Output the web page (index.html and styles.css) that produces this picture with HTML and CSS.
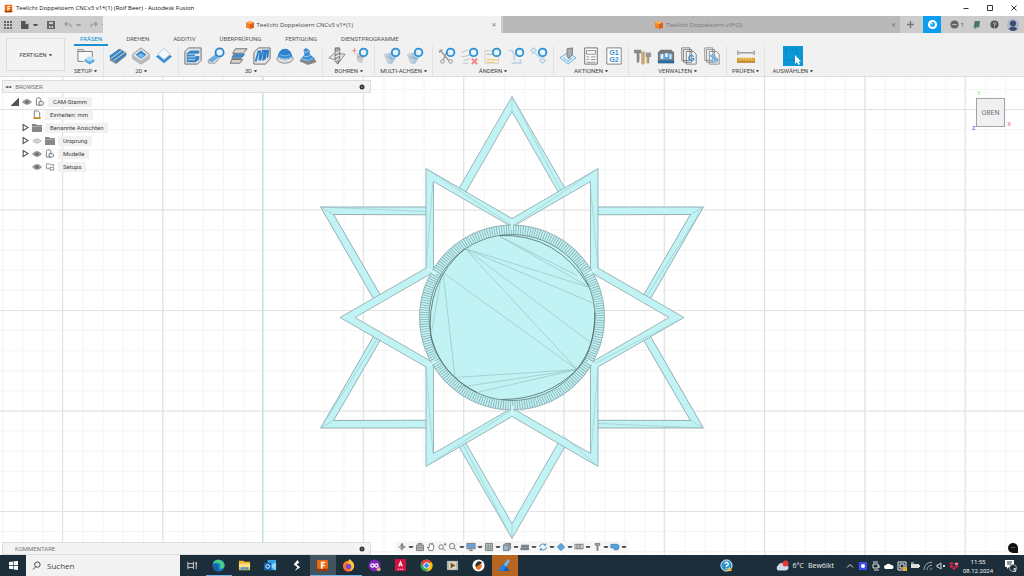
FILE: index.html
```html
<!DOCTYPE html>
<html lang="de">
<head>
<meta charset="utf-8">
<title>Teelicht Doppelstern CNCv3 v1*(1) (Rolf Beer) - Autodesk Fusion</title>
<link rel="stylesheet" href="styles.css">
</head>
<body>
<svg class="defs" aria-hidden="true">
  <symbol id="box" viewBox="0 0 10 10"><path fill="#f58220" d="M0 2 5 0l5 2v6L5 10 0 8z"/><path fill="#ffb15c" d="M0 2 5 0l5 2-5 2z"/><path fill="#d8601a" d="M5 4l5-2v6l-5 2z"/></symbol>
  <symbol id="fusion" viewBox="0 0 10 12"><path fill="#f06a12" d="M0 1h10v10H0z"/><path fill="#9c3505" d="M0 9h10v2H0z"/><path fill="#fff" d="M3.500 2.500h4V4H5v1.300h2v1.400H5V9H3.500z"/></symbol>
  <symbol id="gridi" viewBox="0 0 8 8"><path fill="#666" d="M0 0h2v2H0zM3 0h2v2H3zM6 0h2v2H6zM0 3h2v2H0zM3 3h2v2H3zM6 3h2v2H6zM0 6h2v2H0zM3 6h2v2H3zM6 6h2v2H6z"/></symbol>
  <symbol id="file" viewBox="0 0 8 8"><path fill="#555" d="M0 0h4.500L7.500 3v5H0z"/><path fill="#ccc" d="M4.500 0v3h3z"/></symbol>
  <symbol id="save" viewBox="0 0 8 8"><path fill="#666" d="M0 0h8v8H0z"/><path fill="#ccc" d="M2 1h4v2H2zM2 5h1.500v2H2zM4.500 5H6v2H4.500z"/></symbol>
  <symbol id="undo" viewBox="0 0 8 8"><path fill="none" stroke="#999" stroke-width="1.200" d="M3 1 1 3l2 2M1 3h4q2 0 2 3"/></symbol>
  <symbol id="badge" viewBox="0 0 20 20"><circle cx="14" cy="6" r="4.200" fill="#d9effc" stroke="#2f8fd0" stroke-width="2"/><path fill="#fff" d="M12 5h3v3z"/></symbol>

  <symbol id="setup" viewBox="0 0 20 20"><path fill="#f8f8f8" stroke="#777" d="M1 3h6l1 2h9v11H1z"/><path stroke="#777" d="M1 5h8"/><path fill="#5da7e0" stroke="#fff" d="M14 10l6 3.500v3L14 20l-6-3.500v-3z"/><path fill="#b8dcf7" d="M14 10.500l5 3-5 3-5-3z"/></symbol>
  <symbol id="face" viewBox="0 0 20 20"><path fill="#888" d="M1 11 12 2l7 4v4L8 19l-7-4z"/><path fill="none" stroke="#2f85cf" stroke-width="2.400" d="M1 11 12 3M4 13.500 15.500 5M7 16.500l12-9"/><path stroke="#b9def8" d="M2.500 12.500 14 4M5.500 15l12-9"/></symbol>
  <symbol id="pocket" viewBox="0 0 20 20"><path fill="#e4e4e4" stroke="#888" d="M10 1l9 7v5l-9 6-9-6V8z"/><path fill="#bbb" d="M1 9l9 6v4l-9-6zM19 9l-9 6v4l9-6z"/><path fill="#3587cc" d="M10 4l6 4.500-6 4.500-6-4.500z"/><path fill="#79bbed" d="M10 7l4 2.500-4 2.500-4-2.500z"/></symbol>
  <symbol id="contour" viewBox="0 0 20 20"><path fill="#3b8fd4" d="M10 5l9 5.500-9 7.500-9-7.500z"/><path fill="#f5fafe" stroke="#a9c6dc" d="M10 1.500l7 6.500-7 6-7-6z"/></symbol>
  <symbol id="adapt" viewBox="0 0 20 20"><path fill="#e5e5e5" stroke="#666" d="M1 5l4-4h14v14l-4 4H1z"/><path fill="#3a86c8" d="M3 7l4-3h10v3l-5 1v2h5v4l-4 3H3z"/><path stroke="#c4e2f8" fill="none" d="M4 8h11M4 11h9M4 14h8"/></symbol>
  <symbol id="pocket3" viewBox="0 0 20 20"><path fill="#ddd" stroke="#999" d="M1 15 12 7h6l-9 11H2z"/><path fill="#6fadde" d="M1 15 12 6l4 3L6 17z"/><circle cx="14" cy="6" r="4.500" fill="#e3f3fd" stroke="#2a84cc" stroke-width="2"/></symbol>
  <symbol id="parallel" viewBox="0 0 20 20"><path fill="#d7d7d7" stroke="#666" d="M6 2h13l-4 5H3zM4 8h12l-4 5H2zM2 14h12l-3 4H0z"/><path fill="#398bd0" d="M5 8h12l-4 4H2z"/></symbol>
  <symbol id="scallop" viewBox="0 0 20 20"><path fill="#e7e7e7" stroke="#666" d="M1 6l5-5h13v12l-5 6H1z"/><path fill="none" stroke="#2f7fc6" stroke-width="2" d="M3 16 6 5h2L7 15M8 15l3-11h2l-2 11M13 14l2-10h2l-1 8"/></symbol>
  <symbol id="dome" viewBox="0 0 20 20"><ellipse cx="10" cy="13" rx="9" ry="5" fill="#ddd" stroke="#888"/><path fill="#2f83cc" d="M2 11a8 9 0 0 1 16 0q-8 6-16 0z"/><path fill="none" stroke="#8dc5ef" d="M4 8q6 4 12 0M3 11q7 4 14 0"/></symbol>
  <symbol id="steps" viewBox="0 0 20 20"><path fill="#888" d="M1 14l12-3 6 4v2l-9 3-9-4z"/><path fill="#3b8cd1" d="M2 13 6 9l-1-6 3-2 4 3v4l6 5-7 3z"/><path stroke="#a8d4f4" fill="none" d="M5 5l3 1 4-2M5 10l4 1 4-2M3 13l7 2 6-3"/></symbol>
  <symbol id="drill" viewBox="0 0 20 20"><path fill="#e4e4e4" stroke="#888" d="M1 12l6-5 12 1-6 8z"/><path fill="#aaa" stroke="#666" d="M8 1h5v14l-2 4-3-3z"/><path stroke="#fff" d="M8 7l5-2M8 11l5-2M8 15l5-2"/></symbol>
  <symbol id="drillb" viewBox="0 0 20 20"><path fill="#ccc" d="M6 7h5l4 3-3 8-5-2z"/><path stroke="#e98484" d="M1 4h5M4 1v6"/><path stroke="#999" d="M7 11h6"/><use href="#badge"/></symbol>
  <symbol id="multi" viewBox="0 0 20 20"><path fill="#a9c9e3" d="M1 8l8-2 6 5-5 8-5-1z"/><path fill="#d0d0d0" d="M1 8h5l2 8-3 2z"/><path stroke="#7babd0" d="M4 11l8 2"/><use href="#badge"/></symbol>
  <symbol id="cut" viewBox="0 0 20 20"><path fill="none" stroke="#999" stroke-width="1.500" d="M2 3l10 12M10 5 6 14M1 6l4-3"/><circle cx="5" cy="16" r="2" fill="none" stroke="#888"/><circle cx="14" cy="16" r="2" fill="none" stroke="#888"/><use href="#badge"/></symbol>
  <symbol id="del" viewBox="0 0 20 20"><path fill="none" stroke="#bbb" d="M1 6l7-3M1 11l9-2M3 15l7-2M2 18h6"/><path stroke="#f08080" stroke-width="2" d="M12 13l6 6M18 13l-6 6"/><use href="#badge"/></symbol>
  <symbol id="edit" viewBox="0 0 20 20"><path fill="#f1f1ec" stroke="#ccc" d="M1 4h15v14H1z"/><path stroke="#ecd07a" stroke-width="1.500" d="M3 14h12M3 17h9"/><path stroke="#aaa" d="M3 8h7"/><use href="#badge"/></symbol>
  <symbol id="link" viewBox="0 0 20 20"><path fill="none" stroke="#c0d5e4" stroke-width="2" d="M2 4h4l2 5v6M5 18h10v-4"/><use href="#badge"/></symbol>
  <symbol id="nodes" viewBox="0 0 20 20"><path fill="none" stroke="#b8d0e2" stroke-width="1.500" d="M1 4l3 3 3-3-3-3zM6 7l5 5M14 12l3 3-3 3-3-3z"/><use href="#badge"/></symbol>
  <symbol id="sim" viewBox="0 0 20 20"><path fill="#dbeefb" stroke="#6faad8" d="M1 12l9-6 9 6-9 7z"/><path fill="#aaa" stroke="#777" d="M9 2l6-1v7l-4 5-2-3z"/><path stroke="#6faad8" fill="none" d="M5 12l5 4 5-4"/></symbol>
  <symbol id="sheet" viewBox="0 0 20 20"><path fill="#fafafa" stroke="#666" d="M3 1h14v18H3z"/><path fill="none" stroke="#888" d="M5 4h10v4H5zM5 11h3M10 11h5M5 14h3M10 14h5M5 17h10"/></symbol>
  <symbol id="tools" viewBox="0 0 20 20"><path fill="#888" d="M0 3h8v4H6v9l-2 2-1-2V7H0z"/><path fill="#c9a67a" d="M8 5h4v13l-2 2-2-2z"/><path fill="#999" d="M13 6h6v5h-2v7h-3v-7h-1z"/><path stroke="#d49a45" stroke-width="1.500" d="M15 11v7"/></symbol>
  <symbol id="machine" viewBox="0 0 20 20"><path fill="#777" d="M1 15V6l3-3h12l3 3v12H1z"/><path fill="#5ba5dd" d="M3 7h14v7H3z"/><path fill="#eee" d="M4 8h3v5H4zM9 7h3v4H9zM14 8h2v5h-2z"/><path fill="#2a6ba3" d="M1 15h18v3H1z"/></symbol>
  <symbol id="tmpl" viewBox="0 0 20 20"><path fill="#f7f7f7" stroke="#888" d="M2 1h9v14H2zM4 3h9v14H4zM7 5h8l3 3v11H7z"/><path fill="none" stroke="#7fb0d5" stroke-width="2" d="M8 9l8 8M10 8l7 7M8 14l4 4"/></symbol>
  <symbol id="ruler" viewBox="0 0 20 20"><path fill="none" stroke="#666" d="M1 4v5M19 4v5M2 6.500h16"/><path fill="#dda53c" d="M0 12h20v5H0z"/><path fill="#b27e1f" d="M0 16h20v1.500H0z"/><path stroke="#f6dd9b" d="M4 12v2M7 12v2M10 12v2M13 12v2M16 12v2"/></symbol>
  <symbol id="select" viewBox="0 0 20 20"><path fill="#0b96d6" d="M0 0h20v20H0z"/><path fill="none" stroke="#0986c2" stroke-dasharray="2 1" d="M3 3h11v11H3z"/><path fill="#fff" d="M12 9v9l2-2 1.500 3 1.500-1-1.500-2.500H18z"/></symbol>

  <symbol id="eye" viewBox="0 0 10 8"><path fill="#999" d="M0 4q5-6 10 0-5 6-10 0z"/><circle cx="5" cy="4" r="1.600" fill="#666"/></symbol>
  <symbol id="eyeoff" viewBox="0 0 10 8"><path fill="none" stroke="#aaa" d="M1 4q4-4 8 0-4 4-8 0zM3 4h4"/></symbol>
  <symbol id="folder" viewBox="0 0 10 9"><path fill="#888" d="M0 1h4l1 1h5v7H0z"/><path stroke="#aaa" d="M0 3.500h10"/></symbol>
  <symbol id="comp" viewBox="0 0 10 10"><path fill="#fff" stroke="#777" d="M1 9V2l1-1h3l1 2v6z"/><path fill="#eee" stroke="#777" d="M4 9V5h3l2 1v2L8 9z"/></symbol>
  <symbol id="unit" viewBox="0 0 10 10"><path fill="#fff" stroke="#777" d="M2 8V1h4l2 2v5"/><path stroke="#c48a25" stroke-width="2" d="M1 9h8"/></symbol>
  <symbol id="setf" viewBox="0 0 10 10"><path fill="#fff" stroke="#888" d="M5 7H1V2h3l1 1h4v2M5 6h4v3H5z"/></symbol>
  <symbol id="gear" viewBox="0 0 8 8"><circle cx="4" cy="4" r="2.500" fill="#333"/><path stroke="#999" d="M3 4h2"/></symbol>

  <symbol id="win" viewBox="0 0 10 10"><path fill="#fff" d="M0 1l4.500-.5v4H0zM5.200.4 10 0v4.500H5.200zM0 5.200h4.500v4L0 8.700zM5.200 5.200H10V10l-4.800-.6z"/></symbol>
  <symbol id="glass" viewBox="0 0 10 10"><circle cx="6" cy="4" r="3" fill="none" stroke="#333"/><path stroke="#333" d="M4 6.500 1 9.500"/></symbol>
  <symbol id="task" viewBox="0 0 14 14"><path fill="none" stroke="#ddd" d="M2 3v2h6V3M2 11V9h6v2M2 5v4M8 5v4M11 3v8M10 5h2"/></symbol>
  <symbol id="edge" viewBox="0 0 14 14"><circle cx="7" cy="7" r="6.500" fill="#1686cf"/><path fill="#45cf88" d="M1 5a6.500 6.500 0 0 1 12.500 3q-1 3-5 2 2-6-4-6-2 0-3.500 1z"/><path fill="#1b5fa8" d="M1 6q4-2 6 1-2 4 3 6Q3 15 1 9z"/></symbol>
  <symbol id="explorer" viewBox="0 0 14 14"><path fill="#f4b92f" d="M1 2h5l1 1h6v9H1z"/><path fill="#ffe08a" d="M1 5h12v4H1z"/><path fill="#4899dc" d="M3 9h8v3H9v-1H5v1H3z"/></symbol>
  <symbol id="outlook" viewBox="0 0 14 14"><path fill="#38a7ea" d="M4 1h9v11H4z"/><path fill="#8ed5fa" d="M5 7l8-3v8z"/><path fill="#0b62b5" d="M0 4h8v8H0z"/><circle cx="4" cy="8" r="2" fill="none" stroke="#fff"/></symbol>
  <symbol id="sapp" viewBox="0 0 14 14"><path fill="#fff" d="M8 1 4 6l4 3-3 4 6-4-4-3 3-2z"/></symbol>
  <symbol id="firefox" viewBox="0 0 14 14"><circle cx="7" cy="7.500" r="6" fill="#ff7a22"/><path fill="#ffca3a" d="M8 0q6 4 5 9-2 4-5 4 5-5-2-8z"/><circle cx="7" cy="8" r="3" fill="#7b4ac8"/><path fill="#e5355f" d="M1 6q0 7 7 7.500Q1 15 1 6z"/></symbol>
  <symbol id="infin" viewBox="0 0 14 14"><circle cx="7" cy="7" r="6.500" fill="#7b25b8"/><circle cx="4.800" cy="7" r="1.800" fill="none" stroke="#fff" stroke-width="1.300"/><circle cx="9" cy="7" r="1.800" fill="none" stroke="#fff" stroke-width="1.300"/><circle cx="11.500" cy="11" r="2.200" fill="#e7a37c"/></symbol>
  <symbol id="acad" viewBox="0 0 14 14"><path fill="#d01040" d="M1 0h12v13H1z"/><path fill="none" stroke="#fff" stroke-width="1.200" d="M5 8l2-5 2 5M6 6.500h2"/><path stroke="#fff" stroke-dasharray="1.500 .8" d="M4 11h6"/></symbol>
  <symbol id="chrome" viewBox="0 0 14 14"><circle cx="7" cy="7" r="6.500" fill="#35a853"/><path fill="#e94335" d="M1.300 4A6.500 6.500 0 0 1 12.800 4H7L4 8z"/><path fill="#fbbd05" d="M12.800 4A6.500 6.500 0 0 1 7 13.500L10 8 8 4z"/><circle cx="7" cy="7" r="3" fill="#4285f4" stroke="#fff"/></symbol>
  <symbol id="media" viewBox="0 0 14 14"><path fill="#a7b4bd" d="M1 2h12v10H1z"/><path fill="#e6d2ae" d="M3 3h8v8H3z"/><path fill="#69533a" d="M5 4l5 3-5 3z"/></symbol>
  <symbol id="slicer" viewBox="0 0 14 14"><circle cx="7" cy="7" r="6.500" fill="#fff"/><path fill="#333" d="M5 4q2-3 6 0L5 9Q2 7 5 4z"/><path fill="#f07821" d="M10 5q2 4-3 7-3-1-3-3z"/></symbol>
  <symbol id="paint" viewBox="0 0 14 14"><path fill="#2681e6" d="M0 13 5 5l4 3 1 5z"/><path fill="#65baf5" d="M6 6l5-6 2 2-4 6z"/><path fill="#1560b3" d="M5 13l4-5 4 5z"/></symbol>
  <symbol id="help" viewBox="0 0 14 14"><circle cx="7" cy="7" r="6" fill="#2490d8" stroke="#fff"/><path fill="none" stroke="#fff" stroke-width="1.500" d="M5 5q2-3 4 0 0 1.500-2 2.500v1M7 10v1"/><path fill="#f8bd35" d="M10 8l3 5H7z"/></symbol>
  <symbol id="cloud" viewBox="0 0 14 10"><path fill="#cfd9ec" d="M3 10a3 3 0 0 1 0-5 4 4 0 0 1 7-1 3 3 0 0 1 1 6z"/><circle cx="10.500" cy="3" r="3" fill="#e2382f"/></symbol>
</svg>

<header class="titlebar">
  <svg class="ic9"><use href="#fusion"/></svg>
  <span class="title">Teelicht Doppelstern CNCv3 v1*(1) (Rolf Beer) - Autodesk Fusion</span>
  <div class="winbtns">
    <button aria-label="Minimieren"><svg viewBox="0 0 8 8"><path d="M1.500 4.500h5"/></svg></button>
    <button aria-label="Maximieren"><svg viewBox="0 0 8 8"><path d="M1.500 1.500h5v5h-5z"/></svg></button>
    <button aria-label="Schließen"><svg viewBox="0 0 8 8"><path d="M1.500 1.500l5 5M6.500 1.500l-5 5"/></svg></button>
  </div>
</header>

<div class="docbar">
  <div class="quick">
    <button aria-label="Datengruppe"><svg class="ic8"><use href="#gridi"/></svg></button>
    <button aria-label="Datei" class="dd"><svg class="ic8"><use href="#file"/></svg></button>
    <button aria-label="Speichern"><svg class="ic8"><use href="#save"/></svg></button>
    <button aria-label="Rückgängig" class="dd dim"><svg class="ic8"><use href="#undo"/></svg></button>
    <button aria-label="Wiederholen" class="dd dim"><svg class="ic8 flip"><use href="#undo"/></svg></button>
  </div>
  <div class="doc active"><span class="docname"><svg class="ic8"><use href="#box"/></svg>Teelicht Doppelstern CNCv3 v1*(1)</span><button class="x" aria-label="Tab schließen">✕</button></div>
  <div class="doc"><span class="docname"><svg class="ic8"><use href="#box"/></svg>Teelicht Doppelstern v3*(2)</span><button class="x" aria-label="Tab schließen">✕</button></div>
  <div class="docright">
    <button class="plus" aria-label="Neu"><svg class="ic9" viewBox="0 0 9 9"><path stroke="#777" stroke-width="1.500" d="M4.500 1v7M1 4.500h7"/></svg></button>
    <button class="ext" aria-label="Erweiterungen"><svg viewBox="0 0 10 10"><circle cx="5" cy="5" r="3.200" fill="none" stroke="#fff" stroke-width="2"/><path stroke="#fff" d="M2 2l3 3"/></svg></button>
    <button class="job" aria-label="Auftragsstatus"><svg class="ic9" viewBox="0 0 10 10"><circle cx="5" cy="5" r="4.500" fill="#666"/><path stroke="#ccc" d="M2.500 5h5"/></svg>1</button>
    <button aria-label="Benachrichtigungen"><svg class="ic9" viewBox="0 0 10 10"><path fill="#4d7470" d="M3 1h6L8 7l1 1H1l1-1z"/><circle cx="4" cy="9" r="1" fill="#4d7470"/></svg></button>
    <button aria-label="Hilfe"><svg class="ic9" viewBox="0 0 10 10"><circle cx="5" cy="5" r="4.500" fill="#555"/><path fill="none" stroke="#ddd" d="M3.500 4q1.500-2.500 3 0L5 5.500v1M5 7.500v1"/></svg></button>
    <button aria-label="Profil"><svg class="avatar" viewBox="0 0 12 12"><circle cx="6" cy="6" r="6" fill="#aab5c8"/><circle cx="6" cy="4.500" r="3" fill="#3b4d70"/><path fill="#3b4d70" d="M1.500 10q4.500-5 9 0-4.500 4-9 0z"/></svg></button>
  </div>
</div>

<div class="ribbon">
  <button class="workspace">FERTIGEN <i class="caret"></i></button>
  <div class="ribmain">
    <nav class="tabs">
      <a href="#" class="on">FRÄSEN</a><a href="#">DREHEN</a><a href="#">ADDITIV</a><a href="#">ÜBERPRÜFUNG</a><a href="#">FERTIGUNG</a><a href="#">DIENSTPROGRAMME</a>
    </nav>
    <div class="groups">
      <section class="group single"><div class="icons"><svg><use href="#setup"/></svg></div><button>SETUP <i class="caret"></i></button></section>
      <section class="group"><div class="icons"><svg><use href="#face"/></svg><svg><use href="#pocket"/></svg><svg><use href="#contour"/></svg></div><button>2D <i class="caret"></i></button></section>
      <section class="group"><div class="icons"><svg><use href="#adapt"/></svg><svg><use href="#pocket3"/></svg><svg><use href="#parallel"/></svg><svg><use href="#scallop"/></svg><svg><use href="#dome"/></svg><svg><use href="#steps"/></svg></div><button>3D <i class="caret"></i></button></section>
      <section class="group"><div class="icons"><svg><use href="#drill"/></svg><svg><use href="#drillb"/></svg></div><button>BOHREN <i class="caret"></i></button></section>
      <section class="group"><div class="icons"><svg><use href="#multi"/></svg><svg><use href="#multi"/></svg></div><button>MULTI-ACHSEN <i class="caret"></i></button></section>
      <section class="group"><div class="icons"><svg><use href="#cut"/></svg><svg><use href="#del"/></svg><svg><use href="#edit"/></svg><svg><use href="#link"/></svg><svg><use href="#nodes"/></svg></div><button>ÄNDERN <i class="caret"></i></button></section>
      <section class="group"><div class="icons"><svg><use href="#sim"/></svg><svg><use href="#sheet"/></svg><svg viewBox="0 0 20 20"><path fill="#fff" stroke="#777" d="M2 1h16v18H2z"/><text x="10" y="9" class="gtxt">G1</text><text x="10" y="17" class="gtxt">G2</text></svg></div><button>AKTIONEN <i class="caret"></i></button></section>
      <section class="group"><div class="icons"><svg><use href="#tools"/></svg><svg><use href="#machine"/></svg><svg viewBox="0 0 20 20"><path fill="#f7f7f7" stroke="#777" d="M2 1h9v14H2zM4 3h9v14H4zM7 5h8l3 3v11H7z"/><text x="12.500" y="16" class="gtxt big">G</text></svg><svg><use href="#tmpl"/></svg></div><button>VERWALTEN <i class="caret"></i></button></section>
      <section class="group"><div class="icons"><svg><use href="#ruler"/></svg></div><button>PRÜFEN <i class="caret"></i></button></section>
      <section class="group last"><div class="icons big"><svg><use href="#select"/></svg></div><button>AUSWÄHLEN <i class="caret"></i></button></section>
    </div>
  </div>
</div>

<main class="viewport">
  <svg class="scene" viewBox="0 77 1024 478" preserveAspectRatio="xMidYMid slice" role="img" aria-label="Doppelstern, Ansicht von oben">
    <defs>
      <pattern id="minor" patternUnits="userSpaceOnUse" x="2.400" y="8.500" width="20.060" height="20.100"><path d="M.5 0v20.100M0 .5h20.060" fill="none" stroke="#f4f4f4"/></pattern>
      <pattern id="major" patternUnits="userSpaceOnUse" x="61.900" y="8.600" width="100.300" height="100.500"><path d="M.5 0v100.500M0 .5h100.300" fill="none" stroke="#e0e0e0"/></pattern>
      <g id="spike"><path d="M0-221 56-124 47-124 0-206-47-124-56-124z"/><path class="thin" d="M0-221v15M0-221 49-127"/></g>
    </defs>
    <rect x="0" y="0" width="1024" height="640" fill="url(#minor)"/>
    <rect x="0" y="0" width="1024" height="640" fill="url(#major)"/>
    <path d="M262.500 0v640" stroke="#b4e8c8"/>
    <g transform="translate(512 317.500)" class="part">
      <use href="#spike"/><use href="#spike" transform="rotate(60)"/><use href="#spike" transform="rotate(120)"/><use href="#spike" transform="rotate(180)"/><use href="#spike" transform="rotate(240)"/><use href="#spike" transform="rotate(300)"/>
      <path fill-rule="evenodd" d="M86-149V-49.500L172 0 86 49.500V149L0 99-86 149V49.500L-172 0-86-49.500V-149L0-99zM78.500-136 0-90.500-78.500-136V-45.300L-157 0-78.500 45.300V136L0 90.500 78.500 136V45.300L157 0 78.500-45.300z"/>
      <path class="thin" d="M-86-149 0-92M86-49 78-136M-86 50l7 86M86 50l-7 86M-86-49l7-87M86-149 4-94M86 149 50 117M-86 149 0 92M172 0 79 48"/>
      <circle class="rim" r="92.500"/>
      <circle class="ticks" r="88"/>
      <circle class="disc" r="83"/>
      <path class="gap" d="M0-97v9M0 97v-9M84-48l-8 4M84 48l-8-4M-84-48l8 4M-84 48l8-4"/>
      <path class="inner" d="M-47-69 78-30M-47-69 65 52M-12-81 78-30M-47-69 82-14M-69-45-57 60M-72-47 65 52M-57 60 65 52M-54 70 65 52M-70-45-80 12M-12-81 65-42M-47-69 80 26M-35 75 65 52"/>
      <path class="arc" d="M-12-82Q45-84 77-31M83-5Q82 35 65 52 35 82-10 82M-47-69Q-87-35-81 20-72 56-35 75"/>
    </g>
  </svg>

  <div class="overlay">
    <aside>
      <div class="panelbar"><button class="fold" aria-label="Einklappen">◄◄</button><span>BROWSER</span><svg class="ic8"><use href="#gear"/></svg></div>
      <ul class="tree">
        <li><i class="open"></i><svg class="eye"><use href="#eye"/></svg><svg class="ic10"><use href="#comp"/></svg><span class="root">CAM-Stamm</span></li>
        <li class="l2"><svg class="ic10"><use href="#unit"/></svg><span>Einheiten: mm</span></li>
        <li class="l1"><i class="shut"></i><svg class="ic10"><use href="#folder"/></svg><span>Benannte Ansichten</span></li>
        <li class="l1"><i class="shut"></i><svg class="eye"><use href="#eyeoff"/></svg><svg class="ic10"><use href="#folder"/></svg><span>Ursprung</span></li>
        <li class="l1"><i class="shut"></i><svg class="eye"><use href="#eye"/></svg><svg class="ic10"><use href="#comp"/></svg><span>Modelle</span></li>
        <li class="l2"><svg class="eye"><use href="#eye"/></svg><svg class="ic10"><use href="#setf"/></svg><span>Setups</span></li>
      </ul>
    </aside>
    <div class="panelbar comments"><span>KOMMENTARE</span><svg class="ic8"><use href="#gear"/></svg></div>
  </div>

  <div class="cube"><span class="ax y">Y</span><button>OBEN</button><span class="ax z">Z</span><span class="ax xx">X</span></div>

  <div class="navbar">
    <button class="dd" aria-label="Orbit"><svg viewBox="0 0 10 10"><path d="M5 1v8M1 5h8M3 3.500q5 0 5 1.500T3 7M5 1l-1 2h2z"/></svg></button>
    <button aria-label="Ausrichten"><svg viewBox="0 0 10 10"><path fill="#bbb" d="M1 3h8v6H1zM3 3V1h4v2M1 6h8"/></svg></button>
    <button aria-label="Pan"><svg viewBox="0 0 10 10"><path fill="#fff" d="M3 9 1 5l2 1V2h1V1h1v1h1V1h1v2h1v3L7 9z"/></svg></button>
    <button aria-label="Zoom"><svg viewBox="0 0 10 10"><circle cx="4" cy="5" r="2.500"/><path d="M6 7l3 2M7 2h3M8.500.5v3"/></svg></button>
    <button class="dd" aria-label="Zoomfenster"><svg viewBox="0 0 10 10"><circle cx="4" cy="4" r="3"/><path d="M6 6l3 3"/></svg></button>
    <button class="dd" aria-label="Anzeige"><svg viewBox="0 0 10 10"><path fill="#6c9fd0" d="M0 1h10v6H0zM3 9h4M5 7v2"/></svg></button>
    <button class="dd" aria-label="Raster"><svg viewBox="0 0 10 10"><path fill="#b7cbbd" d="M1 1h8v8H1z"/><path stroke-width=".6" d="M1 4h8M1 6.500h8M4 1v8M6.500 1v8"/></svg></button>
    <button class="dd" aria-label="Ansichten"><svg viewBox="0 0 10 10"><path fill="#9bb6cb" d="M1 3l2-2h6v6L7 9H1zM1 3h6v6M7 3l2-2"/></svg></button>
    <button class="dd" aria-label="Material"><svg viewBox="0 0 10 10"><path fill="#6a8ca8" d="M1 3h8v2H1zM0 6h9v2H0z"/></svg></button>
    <button class="dd" aria-label="Wiedergabe"><svg viewBox="0 0 10 10" class="blue"><path d="M1 5a4 4 0 0 1 7-2M9 5a4 4 0 0 1-7 2M8 1v2H6M2 9V7h2"/></svg></button>
    <button class="dd" aria-label="Körper"><svg viewBox="0 0 10 10" class="blue"><path fill="#5aa8e2" d="M5 1l4 4-4 4-4-4z"/></svg></button>
    <button class="dd" aria-label="Lager"><svg viewBox="0 0 10 10"><path fill="#c2c2c2" d="M0 2h10v5H0zM3 2v5M6 2v5"/></svg></button>
    <button class="dd" aria-label="Werkzeug"><svg viewBox="0 0 10 10"><path fill="#aaa" d="M3 1h5v2H6v6H5V3H3z"/></svg></button>
    <button class="dd" aria-label="Maschine"><svg viewBox="0 0 10 10" class="blue"><path fill="#55a0d9" d="M0 2h8l2 3-2 3H4V6H0z"/></svg></button>
  </div>
  <button class="bubble" aria-label="Assistent">•••</button>
</main>

<footer class="taskbar">
  <button class="start" aria-label="Start"><svg class="ic9"><use href="#win"/></svg></button>
  <label class="search"><svg class="ic9"><use href="#glass"/></svg><input type="text" placeholder="Suchen" aria-label="Suchen"></label>
  <div class="apps">
    <button aria-label="Aufgabenansicht"><svg><use href="#task"/></svg></button>
    <button class="run" aria-label="Edge"><svg><use href="#edge"/></svg></button>
    <button aria-label="Explorer"><svg><use href="#explorer"/></svg></button>
    <button aria-label="Outlook"><svg><use href="#outlook"/></svg></button>
    <button aria-label="S"><svg><use href="#sapp"/></svg></button>
    <button class="run cur" aria-label="Fusion"><svg><use href="#fusion"/></svg></button>
    <button class="run" aria-label="Firefox"><svg><use href="#firefox"/></svg></button>
    <button aria-label="Infinity"><svg><use href="#infin"/></svg></button>
    <button aria-label="Autodesk Access"><svg><use href="#acad"/></svg></button>
    <button aria-label="Chrome"><svg><use href="#chrome"/></svg></button>
    <button aria-label="Medien"><svg><use href="#media"/></svg></button>
    <button aria-label="Slicer"><svg><use href="#slicer"/></svg></button>
    <button class="alert" aria-label="Bildbearbeitung"><svg><use href="#paint"/></svg></button>
  </div>
  <svg class="helper"><use href="#help"/></svg>
  <button class="weather"><svg><use href="#cloud"/></svg><span>6°C</span><span>Bewölkt</span></button>
  <div class="tray">
    <svg viewBox="0 0 10 10"><path fill="none" stroke="#ddd" d="M2 6.500l3-3 3 3"/></svg>
    <svg viewBox="0 0 10 10"><path fill="#3b4df0" d="M1 1h8v8H1z"/><circle cx="5" cy="5" r="2" fill="#fff"/></svg>
    <svg viewBox="0 0 10 10"><path fill="none" stroke="#ddd" d="M2 1h5M2 3h5v4H2zM3 9h5M8 4v3"/></svg>
    <svg viewBox="0 0 10 10"><path fill="#fff" d="M2 8a2 2 0 0 1 0-4 3 3 0 0 1 5 0 2 2 0 0 1 1 4z"/></svg>
    <svg viewBox="0 0 10 10"><path fill="none" stroke="#eee" d="M1 1h8v8H1zM3 3h4v4H3z"/><path fill="#f5a623" d="M6 6h4v4H6z"/></svg>
    <svg viewBox="0 0 10 10"><path fill="#ddd" d="M1 3h8v4H1z"/><path stroke="#ddd" d="M1 2h3M9.500 4v2"/></svg>
    <svg viewBox="0 0 10 10"><path fill="none" stroke="#aaa" d="M1 9q0-7 8-8M4 9q0-4 5-5M7 9q0-1 2-2"/></svg>
    <svg viewBox="0 0 10 10"><path fill="none" stroke="#ddd" d="M1 4h1l3-2v6L2 6H1zM7 4l2 2M9 4 7 6"/></svg>
    <svg viewBox="0 0 10 10"><path fill="#d92341" d="M2.500 1 5 2.500 2.500 4 0 2.500zM7.500 1 10 2.500 7.500 4 5 2.500zM2.500 4 5 5.500 2.500 7 0 5.500zM7.500 4 10 5.500 7.500 7 5 5.500zM5 6l2 1.500L5 9 3 7.500z"/><path stroke="#fff" d="M6 3h3"/></svg>
  </div>
  <time class="clock"><span>11:55</span><span>08.12.2024</span></time>
  <button class="note" aria-label="Benachrichtigungen"><svg viewBox="0 0 12 12"><path fill="#fff" d="M0 0h9v7H4L2 9V7H0z"/><circle cx="8" cy="8" r="3.500" fill="#1b2e39" stroke="#aaa"/><path stroke="#1b2e39" d="M2 2h5M2 4h4"/></svg><b>5</b></button>
</footer>
</body>
</html>
```

FILE: styles.css
```css
* { box-sizing: border-box; }
body {
  margin: 0;
  height: 100vh;
  display: flex;
  flex-direction: column;
  overflow: hidden;
  font: 6px/8px Roboto, "Liberation Sans", sans-serif;
  color: #444;
  background: #fff;
}
button { border: 0; padding: 0; margin: 0; background: none; font: inherit; color: inherit; display: inline-flex; align-items: center; justify-content: center; }
a { color: inherit; text-decoration: none; }
svg { display: block; flex: none; }
.defs { position: absolute; width: 0; height: 0; }
.ic8 { width: 8px; height: 8px; }
.ic9 { width: 9px; height: 9px; }
.ic10 { width: 10px; height: 9px; }
.caret, .dd::after { content: ""; border: 1px solid transparent; border-top: 2px solid #555; border-bottom: 0; display: inline-block; flex: none; margin-left: 2px; vertical-align: 1px; width: 3px; }
.gtxt { font: bold 8px "Liberation Sans", sans-serif; text-anchor: middle; fill: #3b8dcc; }
.gtxt.big { font-size: 10px; }

.titlebar { height: 16px; flex: none; display: flex; align-items: center; padding: 0 6px 0 4px; gap: 3px; color: #111; }
.titlebar .title { flex: 1; white-space: nowrap; font-family: "Open Sans", sans-serif; }
.winbtns { display: flex; gap: 16px; }
.winbtns svg { width: 8px; height: 8px; fill: none; stroke: #333; }

.docbar { height: 17px; flex: none; display: flex; background: #ccc; }
.quick { width: 103px; display: flex; align-items: center; gap: 9px; padding-left: 4px; flex: none; }
.quick .dd { gap: 2px; }
.quick .dim::after { border-top-color: #999; }
.flip { transform: scaleX(-1); }
.doc { flex: 1; display: flex; align-items: center; background: #b9b9b9; padding: 0 4px; color: #777; margin-right: 4px; }
.doc.active { background: #f1f1f1; color: #444; margin-right: 2px; }
.docname { flex: 1; display: flex; justify-content: center; align-items: center; gap: 3px; font-family: "Open Sans", sans-serif; }
.x { color: #777; font: 6px/8px "DejaVu Sans", sans-serif; }
.docright { display: flex; align-items: center; flex: none; gap: 8px; width: 120px; padding: 0 5px 0 2px; justify-content: space-between; }
.ext { width: 18px; height: 17px; background: #0b9df0; }
.ext svg { width: 11px; height: 11px; }
.job { gap: 2px; color: #555; }
.avatar { width: 12px; height: 12px; }

.ribbon { flex: none; height: 44px; display: flex; gap: 2px; background: #f1f1f1; border-bottom: 1px solid #ddd; padding-left: 6px; }
.workspace { width: 59px; height: 33px; margin-top: 5px; border: 1px solid #ddd; background: #f3f3f3; flex: none; }
.ribmain { flex: 1; min-width: 0; }
.tabs { display: flex; gap: 12px; padding-left: 7px; height: 13px; color: #555; }
.tabs a { padding: 2px 6px 0; border-bottom: 2px solid transparent; white-space: nowrap; }
.tabs .on { color: #0a8fd0; border-color: #1a92cf; }
.groups { display: flex; }
.group { display: flex; flex-direction: column; align-items: center; padding: 0 5px; border-right: 1px solid #e2e2e2; height: 30px; }
.single { padding: 0 6px 0 7px; }
.last { padding: 0 7px; border: 0; }
.icons { display: flex; gap: 5px; height: 20px; align-items: center; }
.icons svg { width: 18px; height: 18px; }
.icons.big svg { width: 20px; height: 20px; }
.group button { white-space: nowrap; height: 10px; }

.viewport { flex: 1; position: relative; min-height: 0; overflow: hidden; }
.scene { position: absolute; inset: 0; width: 100%; height: 100%; }
.part { fill: #c1f3f5; stroke: #8ba6a8; stroke-width: .8; }
.thin, .inner { fill: none; stroke: #93b9bc; stroke-width: .6; }
.thin { stroke: #9cc6c9; }
.ticks { fill: none; stroke: #88aeb0; stroke-width: 9; stroke-dasharray: .8 1.600; }
.disc { stroke: #5d7678; }
.gap { stroke: #d5f7f8; stroke-width: 2; }
.arc { fill: none; stroke: #3f5759; stroke-width: .7; }
.overlay { position: absolute; inset: 3px auto 0 2px; width: 36%; display: flex; flex-direction: column; justify-content: space-between; pointer-events: none; }
.panelbar { display: flex; align-items: center; gap: 4px; height: 13px; background: #f3f3f3; border: 1px solid #ddd; padding: 0 4px 0 2px; color: #777; }
.panelbar span { flex: 1; }
.comments { padding-left: 12px; }
.fold { font: 4px/8px "DejaVu Sans", sans-serif; color: #333; }
.tree { list-style: none; margin: 2px 0 0; padding: 0 0 0 9px; }
.tree li { display: flex; align-items: center; gap: 3px; height: 13px; }
.tree .l1 { padding-left: 10px; }
.tree .l2 { padding-left: 21px; }
.tree span { background: #f1f1f1; padding: 1px 5px; line-height: 8px; }
.eye { width: 10px; height: 8px; }
.open, .shut { width: 8px; height: 8px; flex: none; }
.open { background: linear-gradient(135deg, transparent 50%, #555 50%); }
.shut { background: #555; clip-path: polygon(20% 0, 100% 50%, 20% 100%, 20% 0, 34% 25%, 34% 75%, 75% 50%, 34% 25%); }

.cube { position: absolute; top: 21px; right: 19px; width: 29px; height: 29px; }
.cube button { width: 100%; height: 100%; background: #f0f0f2; border: 1px solid #a9a0a6; font-size: 7px; color: #777; }
.ax { position: absolute; }
.ax.y { left: 1px; top: -9px; color: #7ee87e; }
.ax.z { left: -4px; bottom: -5px; color: #6a5ae0; }
.ax.xx { right: -6px; bottom: -1px; color: #e66; }
.navbar { position: absolute; left: 50%; bottom: 2px; transform: translateX(-50%); display: flex; gap: 2px; background: #f6f6f6; padding: 1px 2px; }
.navbar svg { width: 9px; height: 10px; fill: none; stroke: #777; }
.navbar .blue { stroke: #3f86bd; }
.navbar .dd::after { margin-left: 2px; }
.bubble { position: absolute; right: 6px; bottom: 2px; width: 10px; height: 10px; border-radius: 5px 5px 0 5px; background: #111; color: #ccc; font-size: 4px; }

.taskbar { flex: none; height: 21px; display: flex; background: #1b2e39; color: #eee; align-items: stretch; }
.start { width: 26px; }
.search { width: 15%; background: #f2f2f2; display: flex; align-items: center; padding-left: 6px; gap: 6px; }
.search input { border: 0; background: none; width: 100%; padding: 0; font: 8px/10px "Open Sans", sans-serif; outline: 0; }
.search input::placeholder { color: #444; opacity: 1; }
.apps { display: flex; }
.apps button { width: 26px; border-bottom: 1px solid transparent; }
.apps svg { width: 13px; height: 13px; }
.apps .run { border-color: #6fb4e8; }
.apps .cur { background: #44545e; }
.apps .alert { background: #b8651f; }
.helper { width: 13px; height: 13px; margin: auto 42px auto auto; }
.weather { gap: 4px; font: 7px/9px "Open Sans", sans-serif; margin-right: 11px; }
.weather svg { width: 14px; height: 11px; }
.tray { display: flex; align-items: center; gap: 3px; }
.tray svg { width: 10px; height: 10px; }
.clock { display: flex; flex-direction: column; justify-content: center; text-align: center; width: 38px; line-height: 9px; }
.note { width: 27px; position: relative; }
.note svg { width: 12px; height: 12px; }
.note b { position: absolute; right: 8px; bottom: 3px; font-size: 5px; line-height: 6px; }
```
